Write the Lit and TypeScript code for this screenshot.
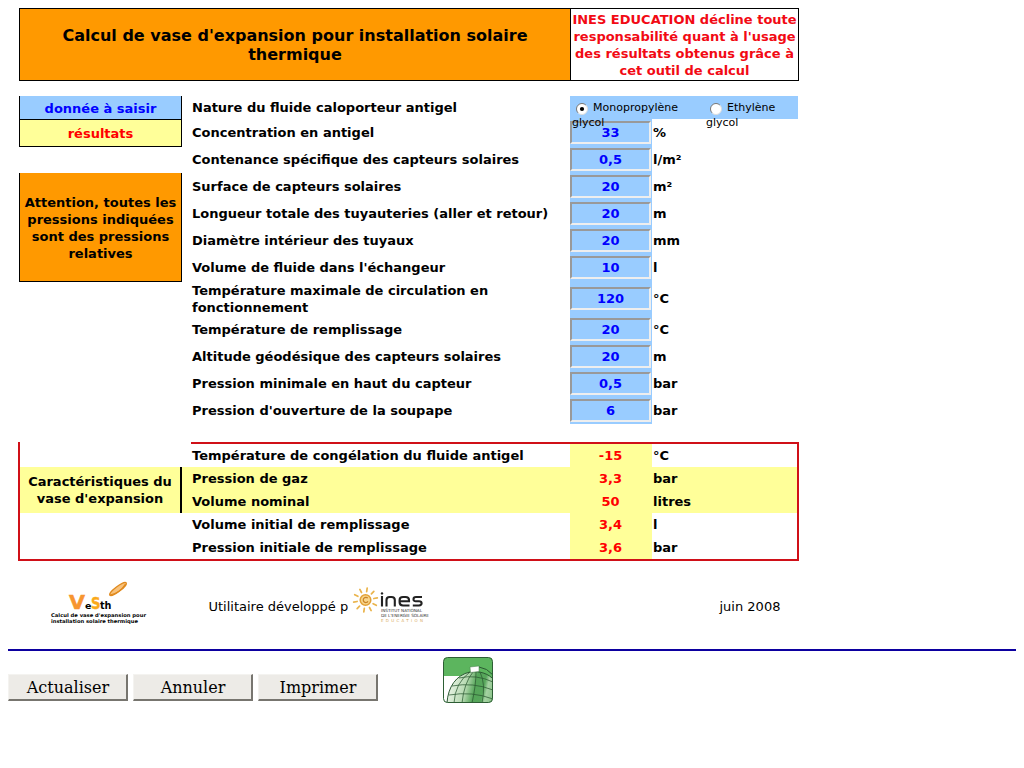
import { LitElement, html, css, svg } from "lit";
import { customElement } from "lit/decorators.js";

const INPUTS: [string, string, string][] = [
  ["Concentration en antigel", "33", "%"],
  ["Contenance spécifique des capteurs solaires", "0,5", "l/m²"],
  ["Surface de capteurs solaires", "20", "m²"],
  ["Longueur totale des tuyauteries (aller et retour)", "20", "m"],
  ["Diamètre intérieur des tuyaux", "20", "mm"],
  ["Volume de fluide dans l'échangeur", "10", "l"],
  ["Température maximale de circulation en fonctionnement", "120", "°C"],
  ["Température de remplissage", "20", "°C"],
  ["Altitude géodésique des capteurs solaires", "20", "m"],
  ["Pression minimale en haut du capteur", "0,5", "bar"],
  ["Pression d'ouverture de la soupape", "6", "bar"],
];

const RESULTS: [string, string, string, boolean][] = [
  ["Température de congélation du fluide antigel", "-15", "°C", false],
  ["Pression de gaz", "3,3", "bar", true],
  ["Volume nominal", "50", "litres", true],
  ["Volume initial de remplissage", "3,4", "l", false],
  ["Pression initiale de remplissage", "3,6", "bar", false],
];

const RAYS = [0, 1, 2, 3, 4, 5, 6, 7, 8, 9];

@customElement("app-root")
export class AppRoot extends LitElement {
  static styles = css`
    :host { display: block; box-sizing: border-box; height: 768px; padding: 8px; background: #fff; color: #000;
      font: bold 13px/17px "DejaVu Sans", sans-serif; overflow: hidden; }
    * { box-sizing: border-box; }
    .head { display: grid; grid-template-columns: 551px 227px; width: 780px; height: 73px; margin-left: 11px;
      border: 1px solid #000; text-align: center; }
    .title { display: flex; align-items: center; justify-content: center; background: #f90;
      border-right: 1px solid #000; font-size: 16px; line-height: 19px; padding: 1px 40px 0; }
    .warn { color: #f20a14; padding-top: 2px; white-space: nowrap; }
    .form { display: grid; grid-template-columns: 163px 616px; column-gap: 1px; width: 780px; margin: 15px 0 0 11px; }
    .side { display: flex; flex-direction: column; text-align: center; }
    .box { display: flex; align-items: center; justify-content: center; border: 1px solid #000; border-top: 0; }
    .blue { height: 24px; background: #9cf; color: #00f; padding-top: 1px; }
    .yellow { height: 27px; background: #ff9; color: #f00; }
    .orange { height: 109px; margin-top: 26px; background: #f90; padding-top: 2px; }
    .row { display: grid; grid-template-columns: 387px 82px 1fr; height: 27px; align-items: stretch; }
    .tall { height: 35px; }
    .first { height: 23px; grid-template-columns: 387px 228px; }
    .label { display: flex; align-items: center; padding: 0 40px 0 9px; }
    .nowrap { white-space: nowrap; padding-right: 0; }
    .unit { display: flex; align-items: center; padding-left: 1px; }
    .cell { display: flex; align-items: center; background: #9cf; }
    .field { width: 81px; height: 23px; border: 2px solid; border-color: #999 #eee #eee #999;
      background: #9cf; color: #00f; text-align: center; line-height: 19px; }
    .fluids { display: flex; background: #9cf; height: 23px; font-size: 11px; font-weight: normal;
      line-height: 15px; padding: 4px 0 0 2px; }
    .fluid { width: 134px; flex: none; position: relative; z-index: 1; }
    .fluid + .fluid { width: 90px; }
    .pick { display: flex; }
    .radio { width: 12px; height: 12px; margin: 3px 5px 0 4px; flex: none; }
    .results { display: grid; grid-template-columns: 162px 10px 605px; width: 781px; height: 119px;
      margin: 18px 0 0 10px; border: 2px solid #d01018; border-top: 0; }
    .carac { margin: 25px 0 46px; background: #ff9; border-right: 2px solid #000; text-align: center;
      padding: 6px 0 0; }
    .gap { margin: 25px 0 46px; background: #ff9; }
    .lines { border-top: 2px solid #d01018; margin-left: -1px; }
    .res { display: grid; grid-template-columns: 379px 82px 1fr; height: 23px; line-height: 23px; }
    .hl { background: #ff9; }
    .res .name { padding-left: 1px; }
    .val { background: #ff9; color: #f00; text-align: center; padding-right: 1px; }
    .u { padding-left: 1px; }
    .foot { display: flex; height: 60px; margin-top: 15px; font-weight: normal; line-height: 62px; }
    .vesth { width: 120px; height: 54px; margin-left: 32px; flex: none; }
    .dev { width: 141px; margin-left: 48.5px; white-space: nowrap; }
    .ines { width: 85px; height: 46px; margin: 5px 0 0 -.5px; flex: none; }
    .date { margin-left: 285.5px; white-space: nowrap; }
    .rule { height: 2px; background: #0c00a0; margin-top: 13px; }
    .bar { display: flex; gap: 5px; padding-top: 23px; }
    .btn { width: 120px; height: 27px; background: #edebe7; border: solid; border-width: 1px 2px 2px 1px;
      border-color: #f4f3f0 #77756f #77756f #f4f3f0; text-align: center; padding-left: 1px;
      font: 16px/25px "DejaVu Serif", serif; }
    .globe { width: 50px; height: 46px; margin: -17px 0 0 60px; }
  `;

  radio(on: boolean) {
    return html`<svg class="radio" viewBox="0 0 12 12">
      <circle cx="6" cy="6" r="5.5" fill="#fff"></circle>
      <path d="M2.1 9.9A5.5 5.5 0 0 1 9.9 2.1" fill="none" stroke="#777"></path>
      <path d="M9.9 2.1A5.5 5.5 0 0 1 2.1 9.9" fill="none" stroke="#ddd"></path>
      ${on ? svg`<circle cx="6" cy="6" r="2.1" fill="#000"></circle>` : ""}
    </svg>`;
  }

  render() {
    return html`
      <div class="head">
        <div class="title">Calcul de vase d'expansion pour installation solaire thermique</div>
        <div class="warn">INES EDUCATION décline toute<br>responsabilité quant à l'usage<br>des résultats obtenus grâce à<br>cet outil de calcul</div>
      </div>
      <div class="form">
        <div class="side">
          <div class="box blue">donnée à saisir</div>
          <div class="box yellow">résultats</div>
          <div class="box orange">Attention, toutes les<br>pressions indiquées<br>sont des pressions<br>relatives</div>
        </div>
        <div>
          <div class="row first">
            <div class="label">Nature du fluide caloporteur antigel</div>
            <div class="fluids">
              <div class="fluid"><div class="pick">${this.radio(true)}Monopropylène</div>glycol</div>
              <div class="fluid"><div class="pick">${this.radio(false)}Ethylène</div>glycol</div>
            </div>
          </div>
          ${INPUTS.map(([label, value, unit], i) => html`
            <div class="row ${i === 6 ? "tall" : ""}">
              <div class="label ${i === 6 ? "" : "nowrap"}">${label}</div>
              <div class="cell"><div class="field">${value}</div></div>
              <div class="unit">${unit}</div>
            </div>`)}
        </div>
      </div>
      <div class="results">
        <div class="carac">Caractéristiques du<br>vase d'expansion</div>
        <div class="gap"></div>
        <div class="lines">
          ${RESULTS.map(([name, value, unit, hl]) => html`
            <div class="res ${hl ? "hl" : ""}">
              <div class="name">${name}</div><div class="val">${value}</div><div class="u">${unit}</div>
            </div>`)}
        </div>
      </div>
      <div class="foot">
        <svg class="vesth" viewBox="40 576 120 54" font-family="DejaVu Sans, sans-serif" font-weight="bold">
          <g transform="rotate(-37 118 589)">
            <ellipse cx="118" cy="589" rx="10.3" ry="2.6" fill="#f8c27c" stroke="#e08a1e" stroke-width="1.3"></ellipse>
            <path d="M108 589Q117 593.5 127 589.5" fill="none" stroke="#e08a1e" stroke-width="1.2"></path>
          </g>
          <text x="69" y="608.5" font-size="20" textLength="16" lengthAdjust="spacingAndGlyphs" fill="#f7952f" stroke="#f7952f" stroke-width=".5">V</text>
          <text x="85" y="608.5" font-size="9.5">e</text>
          <text x="91" y="608.5" font-size="15" textLength="9.5" lengthAdjust="spacingAndGlyphs" fill="#fba919" stroke="#fba919" stroke-width=".4">S</text>
          <text x="100" y="608.5" font-size="10" textLength="11.5" lengthAdjust="spacingAndGlyphs">th</text>
          <text x="51" y="617" font-size="5" textLength="95" lengthAdjust="spacingAndGlyphs">Calcul de vase d'expansion pour</text>
          <text x="51" y="623.3" font-size="5" textLength="87" lengthAdjust="spacingAndGlyphs">installation solaire thermique</text>
        </svg>
        <div class="dev">Utilitaire développé p</div>
        <svg class="ines" viewBox="349 581 85 46" font-family="DejaVu Sans, sans-serif">
          <g stroke="#eab44c" stroke-width="1.7" stroke-linecap="round">
            ${RAYS.map((i) => svg`<path transform="rotate(${i * 36 + 8} 365.5 600)" d="M365.5 591.5V588"></path>`)}
          </g>
          <circle cx="365.5" cy="600" r="5.3" fill="#f8d58c" stroke="#e2a136" stroke-width="1.5"></circle>
          <path d="M367.8 598.2A2.6 2.6 0 1 0 368 601.4" fill="none" stroke="#c98426" stroke-width="1.2"></path>
          <g fill="none" stroke="#222" stroke-width="2.1">
            <path d="M382 596V606.5M386.5 606.5V600Q386.5 597 389.6 597H391.5Q394.8 597 394.8 600V606.5"></path>
            <path d="M399.6 601.3H409V600Q409 597 405.5 597H403Q399.6 597 399.6 600V602.3Q399.6 605.5 403 605.5H409.5"></path>
            <path d="M422 597H416Q413.5 597 413.5 599.2T416 601.2H419Q421.6 601.2 421.6 603.3T419 605.5H412.8"></path>
          </g>
          <circle cx="382" cy="593.4" r="1.2" fill="#222"></circle>
          <text x="381" y="612" font-size="4.3" textLength="41" lengthAdjust="spacingAndGlyphs" fill="#333">INSTITUT NATIONAL</text>
          <text x="381" y="616.8" font-size="4.3" textLength="48" lengthAdjust="spacingAndGlyphs" fill="#333">DE L'ENERGIE SOLAIRE</text>
          <text x="381" y="622" font-size="4" textLength="42" fill="#d9ab60">EDUCATION</text>
        </svg>
        <div class="date">juin 2008</div>
      </div>
      <div class="rule"></div>
      <div class="bar">
        <div class="btn">Actualiser</div>
        <div class="btn">Annuler</div>
        <div class="btn">Imprimer</div>
        <svg class="globe" viewBox="0 0 50 46">
          <defs>
            <clipPath id="frame"><rect x=".5" y=".5" width="49" height="45" rx="4"></rect></clipPath>
            <linearGradient id="dome" x1="0" x2="1" y1=".4" y2=".55">
              <stop offset="0" stop-color="#f0f7ed"></stop><stop offset=".4" stop-color="#b5d9b0"></stop>
              <stop offset=".6" stop-color="#55a559"></stop><stop offset=".78" stop-color="#57a65b"></stop>
              <stop offset=".86" stop-color="#a5d2a2"></stop><stop offset="1" stop-color="#8cc48b"></stop>
            </linearGradient>
          </defs>
          <g clip-path="url(#frame)">
            <rect width="50" height="46" fill="#5cb55e"></rect>
            <path d="M0 19H17L8 46H0Z" fill="#fff"></path>
            <path d="M4 46C5 30 13 18 27 15C37 13.5 46 17 51 23V46Z" fill="url(#dome)"></path>
            <g fill="none" stroke="#2c5a33" stroke-width=".75">
              <path d="M4 46C5 30 13 18 27 15C37 13.5 46 17 51 23" stroke-width="1"></path>
              <path d="M11 46Q12 26 27 15M19 46Q21 26 30 15M29 46Q33 28 33 15M39 46Q43 27 37 15"></path>
              <path d="M16 21Q33 17 50 25M9 29Q30 25 50 33M6 38Q29 34 50 42"></path>
              <path d="M36 10Q44 11 50 18" stroke-width="1"></path>
            </g>
            <path d="M27 10L36 9V14.5L27.5 15.5Z" fill="#fff" stroke="#477c4a" stroke-width=".5"></path>
          </g>
          <rect x=".5" y=".5" width="49" height="45" rx="4" fill="none" stroke="#2d5e34"></rect>
        </svg>
      </div>
    `;
  }
}
